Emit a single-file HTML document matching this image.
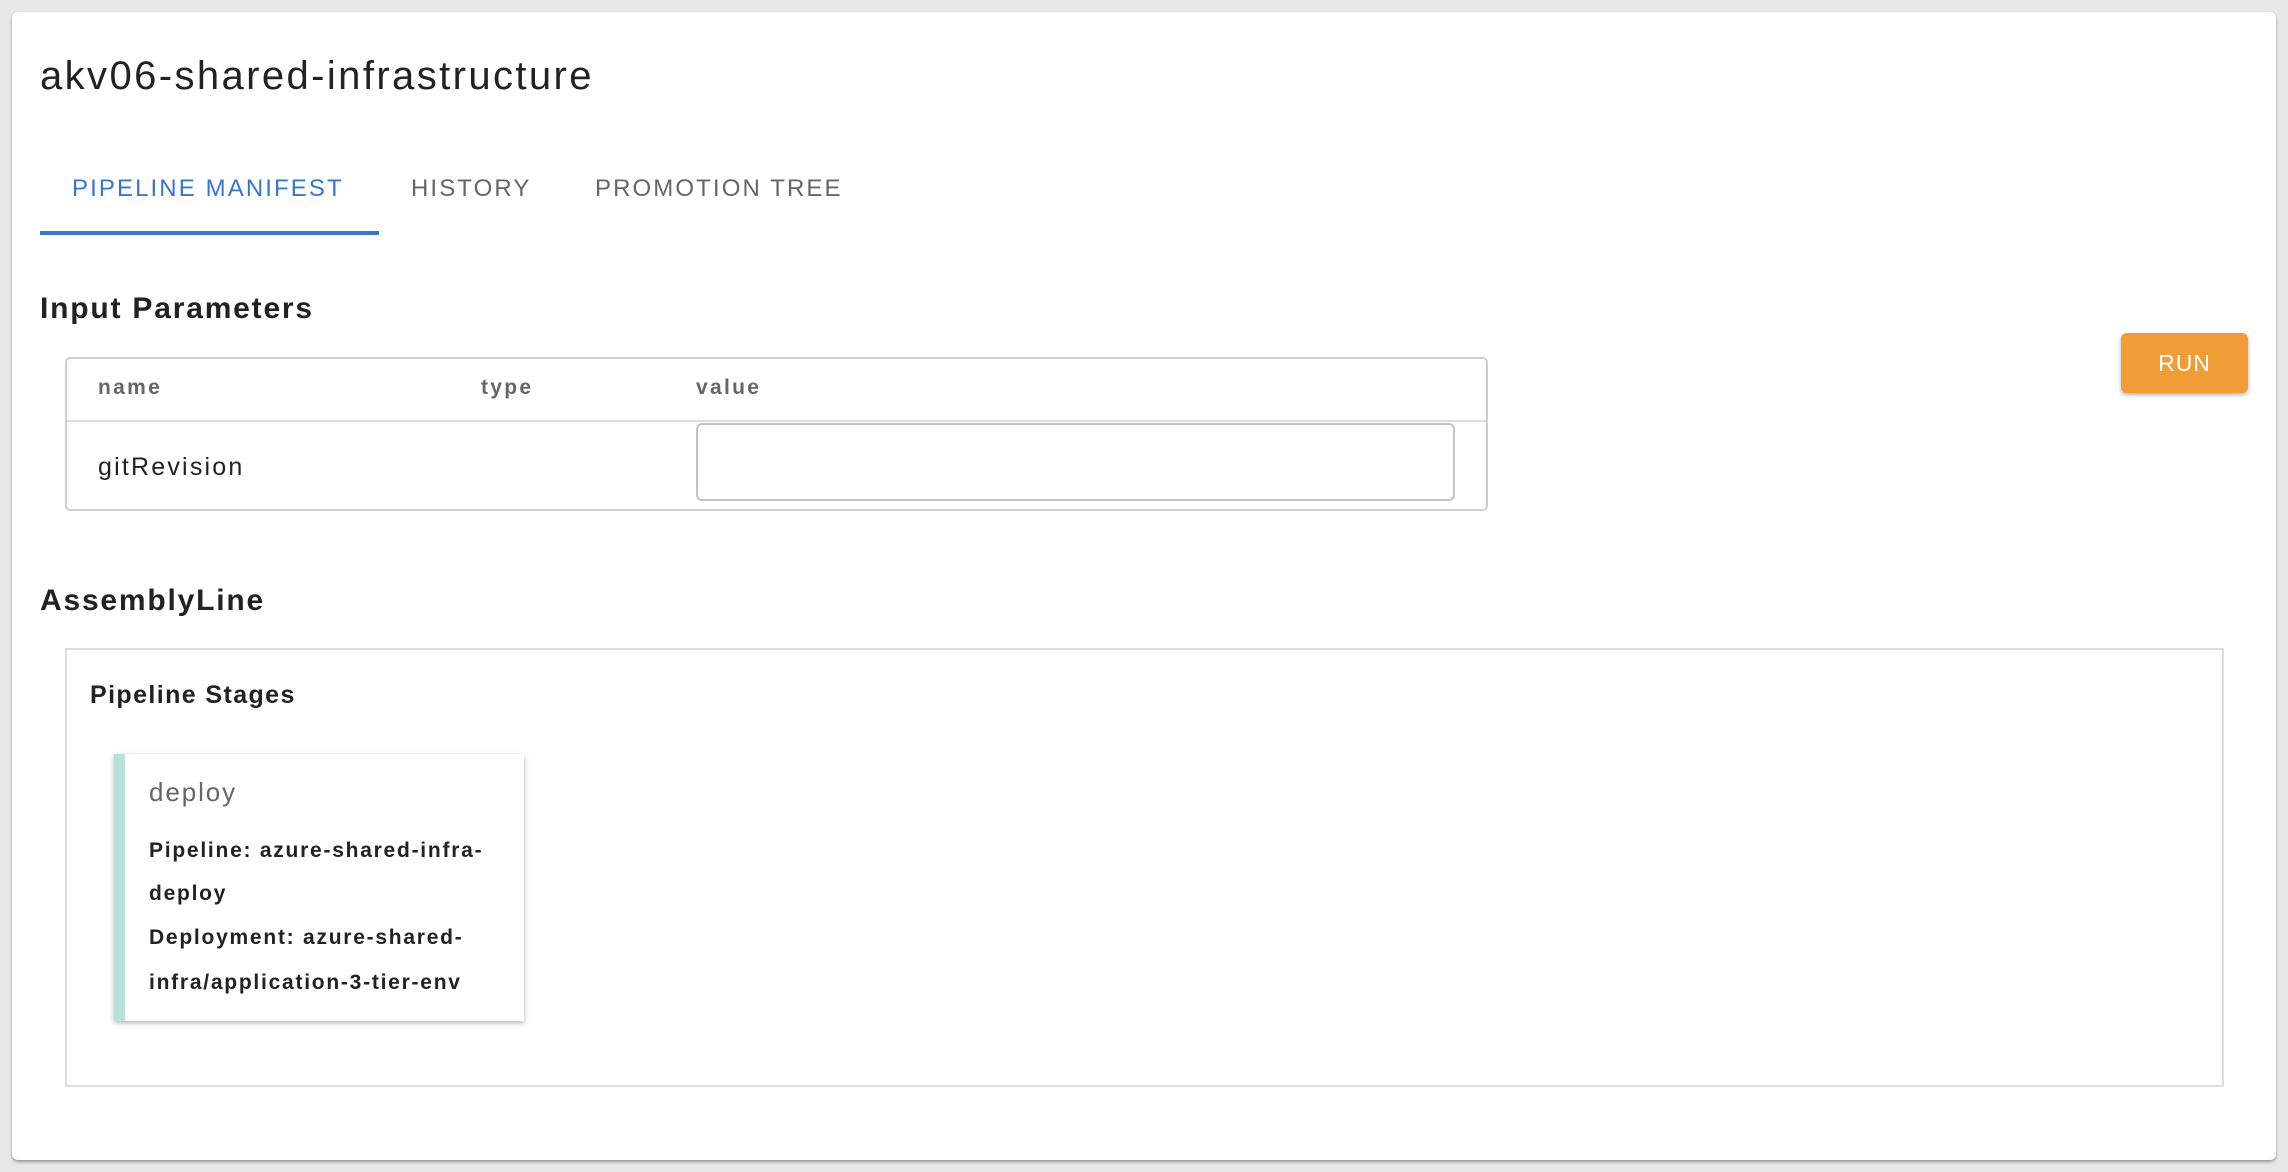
<!DOCTYPE html>
<html><head><meta charset="utf-8">
<style>
*{box-sizing:border-box;margin:0;padding:0}
body{width:2288px;height:1172px;background:#e8e8e8;font-family:"Liberation Sans",sans-serif;position:relative;overflow:hidden;color:#222}
.card{position:absolute;left:12px;top:12px;width:2264px;height:1148px;background:#fff;border-radius:6px;box-shadow:0 2px 3px rgba(0,0,0,.35)}
.abs{position:absolute;white-space:nowrap}
.title{font-size:40px;line-height:44px;color:#222;letter-spacing:2.4px}
.tab{font-size:24px;line-height:28px;font-weight:500;color:#666;letter-spacing:2.1px}
.ul{position:absolute;width:339px;height:4px;background:#3a74d1}
.h{font-size:30px;font-weight:bold;line-height:36px;color:#222;letter-spacing:1.8px}
.tbl{position:absolute;width:1423px;height:154px;border:2px solid #cfcfcf;border-radius:5px}
.hline{position:absolute;left:0;right:0;top:61px;height:2px;background:#ddd}
.th{top:15px;font-size:21px;font-weight:bold;color:#666;line-height:28px;letter-spacing:2.3px}
.inp{position:absolute;left:629px;top:64px;width:759px;height:78px;border:2px solid #c4c4c4;border-radius:6px}
.run{position:absolute;width:127px;height:60px;background:#f09d38;border-radius:6px;color:#fff;font-size:23px;line-height:60px;text-align:center;box-shadow:0 2px 4px rgba(0,0,0,.3);letter-spacing:1px}
.box{position:absolute;width:2159px;height:439px;border:2px solid #ddd}
.stage{position:absolute;width:410px;height:267px;background:#fff;border-left:11px solid #b9dfdb;box-shadow:0 2px 5px rgba(0,0,0,.3)}
.ln{font-size:21px;font-weight:bold;color:#222;line-height:30px;letter-spacing:1.75px}
</style></head><body>
<div class="card">
<div class="abs title" style="left:28px;top:42px">akv06-shared-infrastructure</div>
<div class="abs tab" style="left:60px;top:163px;color:#3a74d1">PIPELINE MANIFEST</div>
<div class="abs tab" style="left:399px;top:163px">HISTORY</div>
<div class="abs tab" style="left:583px;top:163px">PROMOTION TREE</div>
<div class="ul" style="left:28px;top:219px"></div>
<div class="abs h" style="left:28px;top:279px">Input Parameters</div>
<div class="tbl" style="left:53px;top:345px">
 <div class="abs th" style="left:31px">name</div>
 <div class="abs th" style="left:414px">type</div>
 <div class="abs th" style="left:629px">value</div>
 <div class="hline"></div>
 <div class="abs" style="left:31px;top:93px;font-size:25px;line-height:30px;color:#222;letter-spacing:2.2px">gitRevision</div>
 <div class="inp"></div>
</div>
<div class="run" style="left:2109px;top:321px">RUN</div>
<div class="abs h" style="left:28px;top:571px">AssemblyLine</div>
<div class="box" style="left:53px;top:636px">
 <div class="abs" style="left:23px;top:30px;font-size:25px;font-weight:bold;line-height:30px;letter-spacing:1.4px">Pipeline Stages</div>
</div>
<div class="stage" style="left:102px;top:742px">
 <div class="abs" style="left:24px;top:22px;font-size:26px;color:#666;line-height:32px;letter-spacing:1.9px">deploy</div>
 <div class="abs ln" style="left:24px;top:82px">Pipeline: azure-shared-infra-</div>
 <div class="abs ln" style="left:24px;top:125px">deploy</div>
 <div class="abs ln" style="left:24px;top:169px">Deployment: azure-shared-</div>
 <div class="abs ln" style="left:24px;top:214px">infra/application-3-tier-env</div>
</div>
</div>
</body></html>
